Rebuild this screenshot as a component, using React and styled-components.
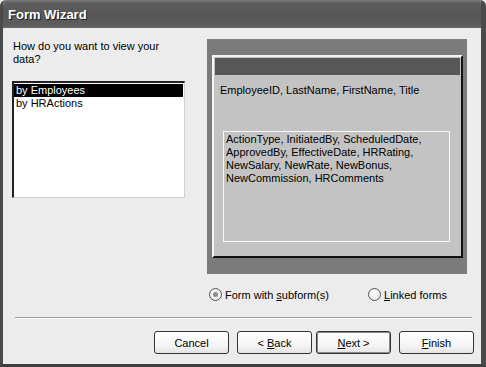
import React from "react";
import styled, { createGlobalStyle } from "styled-components";

const Global = createGlobalStyle`
  html, body { margin: 0; padding: 0; background: #ececec; }
  body { font-family: "Liberation Sans", Arial, sans-serif; }
`;

const Window = styled.div`
  width: 486px;
  height: 367px;
  box-sizing: border-box;
  display: flex;
  flex-direction: column;
  background: #ececec;
  border-left: 3px solid #4a4a4a;
  border-right: 5px solid #4a4a4a;
  border-bottom: 3px solid #3f3f3f;
  border-radius: 6px 6px 0 0;
  overflow: hidden;
`;

const TitleBar = styled.div`
  height: 28px;
  flex: none;
  margin: 0 -5px 0 -3px;
  padding-left: 8px;
  display: flex;
  align-items: center;
  background: linear-gradient(#7a7a7a 0px, #5e5e5e 3px, #575757 14px, #5d5d5d 26px, #6a6a6a 28px);
  color: #fff;
  font: bold 13px "Liberation Sans", Arial, sans-serif;
  text-shadow: 1px 1px 0 #222;
`;

const Body = styled.div`
  flex: 1;
  display: flex;
  flex-direction: column;
  padding: 11px 7px 0 9px;
  font-size: 11px;
  color: #000;
`;

const MainRow = styled.div`
  display: flex;
  gap: 22px;
`;

const LeftCol = styled.div`
  width: 173px;
  display: flex;
  flex-direction: column;
`;

const Question = styled.div`
  line-height: 13px;
  padding: 1px 0 0 1px;
  height: 41px;
`;

const ListBox = styled.div`
  box-sizing: border-box;
  height: 117px;
  background: #fff;
  border-top: 2px solid #222;
  border-left: 2px solid #222;
  border-right: 1px solid #cfcfcf;
  border-bottom: 1px solid #cfcfcf;
  padding: 1px 1px 0 0;
`;

const ListItem = styled.div`
  height: 13px;
  line-height: 13px;
  padding-left: 2px;
  background: ${(p) => (p.$selected ? "#000" : "transparent")};
  color: ${(p) => (p.$selected ? "#fff" : "#000")};
`;

const Preview = styled.div`
  width: 260px;
  height: 235px;
  box-sizing: border-box;
  background: #7b7b7b;
  padding: 16px 4px 16px 5px;
  display: flex;
`;

const Sample = styled.div`
  flex: 1;
  background: #c3c3c3;
  border-top: 2px solid #f4f4f4;
  border-left: 2px solid #f4f4f4;
  border-right: 2px solid #111;
  border-bottom: 2px solid #111;
  padding: 1px;
  display: flex;
  flex-direction: column;
`;

const HeaderBar = styled.div`
  height: 17px;
  background: #575757;
  flex: none;
`;

const MainFields = styled.div`
  padding: 9px 0 0 5px;
  line-height: 13px;
  height: 47px;
`;

const SubBox = styled.div`
  margin: 0 10px 0 8px;
  height: 111px;
  box-sizing: border-box;
  border: 1px solid #f8f8f8;
  padding: 1px 0 0 2px;
  line-height: 13px;
`;

const RadioRow = styled.div`
  display: flex;
  margin-top: 13px;
  padding-left: 197px;
  height: 15px;
  align-items: center;
`;

const RadioLabel = styled.label`
  display: flex;
  align-items: center;
  gap: 3px;
  width: ${(p) => p.$w}px;
  font-size: 11px;
`;

const RadioCircle = styled.span`
  width: 11px;
  height: 11px;
  border-radius: 50%;
  border: 1px solid #555;
  background: radial-gradient(circle at 40% 40%, #fff, #e2e2e2);
  display: flex;
  align-items: center;
  justify-content: center;
  flex: none;
`;

const RadioDot = styled.span`
  width: 5px;
  height: 5px;
  border-radius: 50%;
  background: #8a8a8a;
`;

const Separator = styled.div`
  margin: 15px 2px 0 3px;
  height: 1px;
  background: #9d9d9d;
  border-bottom: 1px solid #fafafa;
`;

const ButtonRow = styled.div`
  display: flex;
  justify-content: flex-end;
  margin-top: 12px;
`;

const Button = styled.button`
  width: 75px;
  height: 23px;
  margin-left: ${(p) => p.$gap || 0}px;
  box-sizing: border-box;
  border: 1px solid #333;
  border-radius: 3px;
  background: linear-gradient(#ffffff, #f3f3f3 70%, #e4e4e4);
  box-shadow: ${(p) => (p.$default ? "inset 0 0 0 1px #8a8a8a" : "none")};
  font: 11px "Liberation Sans", Arial, sans-serif;
  color: #000;
  padding: 0;
`;

const U = styled.span`
  text-decoration: underline;
`;

export default function App() {
  return (
    <>
      <Global />
      <Window>
        <TitleBar>Form Wizard</TitleBar>
        <Body>
          <MainRow>
            <LeftCol>
              <Question>
                How do you want to view your
                <br />
                data?
              </Question>
              <ListBox>
                <ListItem $selected>by Employees</ListItem>
                <ListItem>by HRActions</ListItem>
              </ListBox>
            </LeftCol>
            <Preview>
              <Sample>
                <HeaderBar />
                <MainFields>EmployeeID, LastName, FirstName, Title</MainFields>
                <SubBox>
                  ActionType, InitiatedBy, ScheduledDate,
                  <br />
                  ApprovedBy, EffectiveDate, HRRating,
                  <br />
                  NewSalary, NewRate, NewBonus,
                  <br />
                  NewCommission, HRComments
                </SubBox>
              </Sample>
            </Preview>
          </MainRow>
          <RadioRow>
            <RadioLabel $w={159}>
              <RadioCircle>
                <RadioDot />
              </RadioCircle>
              <span>
                Form with <U>s</U>ubform(s)
              </span>
            </RadioLabel>
            <RadioLabel $w={100}>
              <RadioCircle />
              <span>
                <U>L</U>inked forms
              </span>
            </RadioLabel>
          </RadioRow>
          <Separator />
          <ButtonRow>
            <Button>Cancel</Button>
            <Button $gap={8}>
              &lt; <U>B</U>ack
            </Button>
            <Button $gap={4} $default>
              <U>N</U>ext &gt;
            </Button>
            <Button $gap={8}>
              <U>F</U>inish
            </Button>
          </ButtonRow>
        </Body>
      </Window>
    </>
  );
}
